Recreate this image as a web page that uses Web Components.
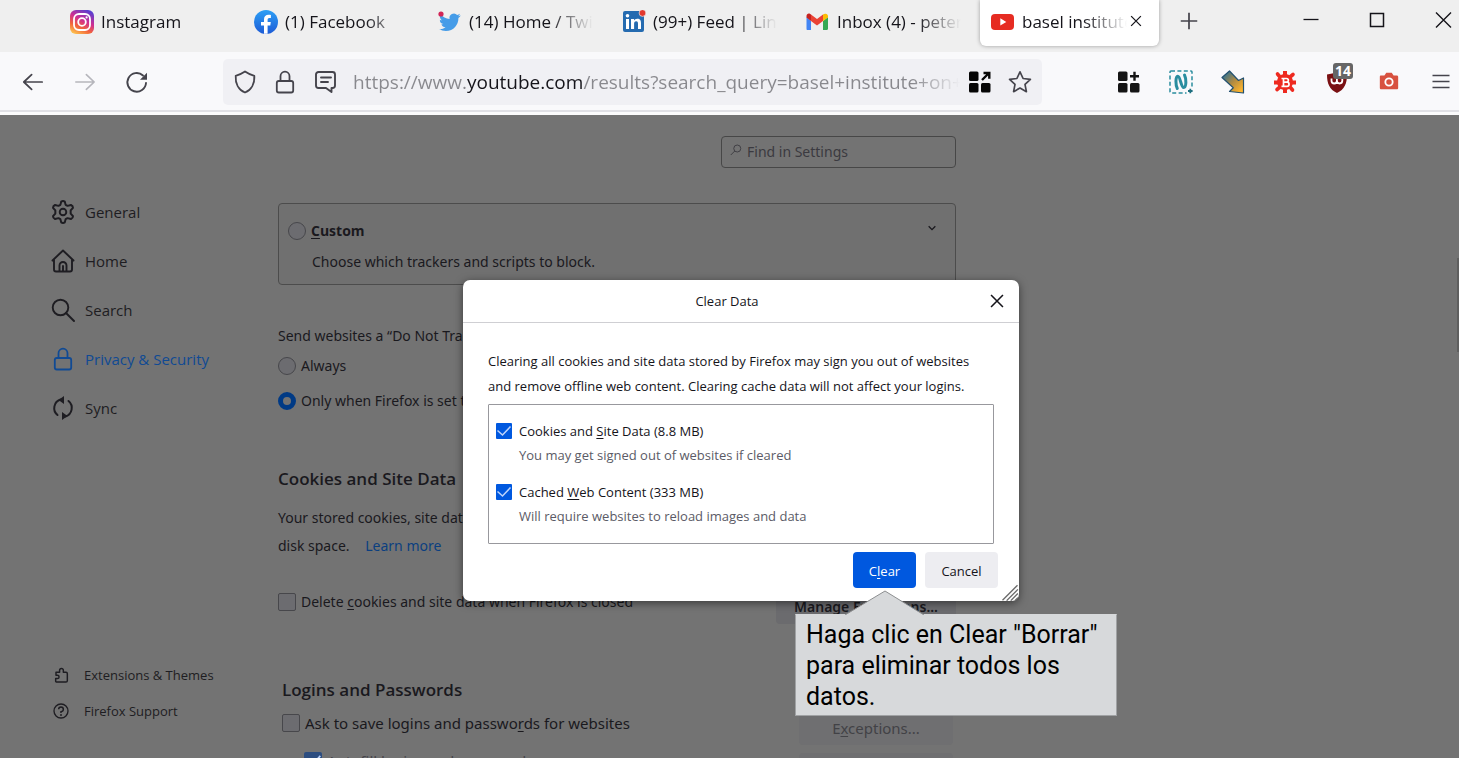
<!DOCTYPE html>
<html lang="en">
<head>
<meta charset="utf-8">
<title>Settings</title>
<style>
  html, body { height: 100%; }
  body {
    margin: 0;
    display: flex;
    flex-direction: column;
    overflow: hidden;
    font-family: "Open Sans", "Noto Sans", sans-serif;
    font-size: 14px;
    color: #15141a;
  }
</style>
</head>
<body>
<tab-strip>
  <browser-tab><ui-icon slot="icon" name="instagram" size="24"></ui-icon>Instagram</browser-tab>
  <browser-tab><ui-icon slot="icon" name="facebook" size="24"></ui-icon>(1) Facebook</browser-tab>
  <browser-tab><ui-icon slot="icon" name="twitter" size="24"></ui-icon>(14) Home / Twitter</browser-tab>
  <browser-tab><ui-icon slot="icon" name="linkedin" size="24"></ui-icon>(99+) Feed | LinkedIn</browser-tab>
  <browser-tab><ui-icon slot="icon" name="gmail" size="24"></ui-icon>Inbox (4) - peter</browser-tab>
  <browser-tab active><ui-icon slot="icon" name="youtube" size="24"></ui-icon>basel institute on</browser-tab>
</tab-strip>
<nav-toolbar></nav-toolbar>
<settings-page>
  <clear-data-dialog slot="dialog">
    <tip-callout slot="tip">Haga clic en Clear "Borrar" para eliminar todos los datos.</tip-callout>
  </clear-data-dialog>
</settings-page>

<script>
const ICONS = {
  instagram: `<defs><linearGradient id="g" x1="0.2" y1="1" x2="0.7" y2="0"><stop offset="0" stop-color="#fdc44f"/><stop offset=".3" stop-color="#f2653a"/><stop offset=".6" stop-color="#cf2e92"/><stop offset="1" stop-color="#5a3fd0"/></linearGradient></defs><rect width="24" height="24" rx="6" fill="url(#g)"/><rect x="4" y="4" width="16" height="16" rx="5" fill="none" stroke="#fff" stroke-width="1.8"/><circle cx="12" cy="12" r="3.8" fill="none" stroke="#fff" stroke-width="1.8"/><circle cx="16.6" cy="7.4" r="1.1" fill="#fff"/>`,
  facebook: `<defs><linearGradient id="g" x1="0" y1="0" x2="0" y2="1"><stop offset="0" stop-color="#2c9ff5"/><stop offset="1" stop-color="#1d5bd6"/></linearGradient></defs><circle cx="12" cy="12" r="12" fill="url(#g)"/><path d="M10 23.8V15.5H7V12h3V9.400C10 6.400 11.800 4.800 14.500 4.800c1.300 0 2.400.2 2.400.2v2.900h-1.500c-1.400 0-1.800.9-1.800 1.800V12h3.200l-.5 3.500h-2.700v8.300z" fill="#fff"/>`,
  twitter: `<path transform="translate(1 1.500) scale(.9)" fill="#459ce8" d="M23.950 4.570a10 10 0 0 1-2.820.770 4.960 4.960 0 0 0 2.160-2.720c-.95.550-2 .950-3.130 1.180a4.920 4.920 0 0 0-8.380 4.480C7.690 8.090 4.070 6.130 1.640 3.160a4.820 4.820 0 0 0-.670 2.480c0 1.710.870 3.210 2.190 4.100a4.900 4.900 0 0 1-2.230-.620v.060a4.920 4.920 0 0 0 3.950 4.830 5 5 0 0 1-2.210.080 4.940 4.940 0 0 0 4.600 3.420A9.870 9.870 0 0 1 0 19.540a13.940 13.940 0 0 0 7.550 2.210c9.050 0 14-7.500 14-13.980 0-.210 0-.420-.020-.630a9.940 9.940 0 0 0 2.460-2.550z"/><circle cx="3" cy="4" r="2.600" fill="#d22556"/>`,
  linkedin: `<g transform="translate(1 0)"><rect y="1" width="21" height="21" rx="2" fill="#256bb0"/><path fill="#fff" d="M3 9h3v10H3zM8 9h3v1.500C11.600 9.500 12.700 8.700 14.300 8.700c3 0 3.700 2 3.700 4.600V19h-3v-5c0-1.500-.2-2.700-1.800-2.700-1.700 0-2.100 1.300-2.100 2.700v5H8z"/><circle cx="4.500" cy="5.800" r="1.800" fill="#fff"/><circle cx="19.500" cy="3" r="3.400" fill="#e2382d" stroke="#efefef" stroke-width=".7"/></g>`,
  gmail: `<path fill="#4285f4" d="M1 20h4V11L.5 7v11.500C.500 19.500 1 20 1 20z"/><path fill="#34a853" d="M17 20h3.500c1 0 1.500-.7 1.500-1.500V7l-5 4z"/><path fill="#fbbc04" d="M17 4.500V11l5-3.500V6c0-2-2.200-3-3.700-1.900z"/><path fill="#ea4335" d="M5 11V4.500l6 4.600 6-4.600V11l-6 4.600z"/><path fill="#c5221f" d="M.5 6v1.500L5 11V4.500L4.200 4C2.500 3 .5 4 .5 6z"/>`,
  youtube: `<rect y="4" width="23" height="16" rx="4" fill="#e62c22"/><path d="M9.300 8.300v7.200l6-3.600z" fill="#fff"/>`,
  close: `<path d="M5.500 5.500l13 13M18.500 5.500l-13 13" stroke="currentColor" stroke-width="1.700" fill="none"/>`,
  plus: `<path d="M12 3v18M3 12h18" stroke="currentColor" stroke-width="1.900"/>`,
  minimize: `<path d="M4.500 11.500h15" stroke="currentColor" stroke-width="1.300"/>`,
  maximize: `<path d="M5.500 5.500h13v13h-13z" stroke="currentColor" stroke-width="1.500" fill="none"/>`,
  winclose: `<path d="M5 4.500l15 15M20 4.500l-15 15" stroke="currentColor" stroke-width="1.400"/>`,
  back: `<path d="M22 12H2M10.500 4l-8.500 8 8.500 8" stroke="currentColor" stroke-width="1.900" fill="none" stroke-linecap="round" stroke-linejoin="round"/>`,
  forward: `<path d="M2 12h20M13.500 4l8.500 8-8.500 8" stroke="currentColor" stroke-width="1.800" fill="none" stroke-linecap="round" stroke-linejoin="round"/>`,
  reload: `<path d="M21 13a9.300 9.300 0 1 1-3-7.500" stroke="currentColor" stroke-width="1.900" fill="none" stroke-linecap="round"/><path d="M22 2.800v7h-7z" fill="currentColor"/>`,
  shield: `<path d="M12 1.500c2.800 2 5.800 3.200 9.300 4.300C21.800 13.500 18.500 20 12 22.500 5.500 20 2.200 13.500 2.700 5.800 6.200 4.700 9.200 3.500 12 1.500z" stroke="currentColor" stroke-width="1.800" fill="none" stroke-linejoin="round"/>`,
  lock: `<rect x="3.800" y="11" width="16.400" height="11.500" rx="2" stroke="currentColor" stroke-width="1.800" fill="none"/><path d="M7.500 11V6.200a4.500 4.500 0 0 1 9 0V11" stroke="currentColor" stroke-width="1.800" fill="none"/>`,
  note: `<path d="M5.500 2h14a2.500 2.500 0 0 1 2.500 2.500v11a2.500 2.500 0 0 1-2.500 2.500H18.500v4l-5.500-4H5.500A2.500 2.500 0 0 1 3 15.500V4.500A2.500 2.500 0 0 1 5.500 2zM8 7.500h10M8 12h7" stroke="currentColor" stroke-width="1.900" fill="none" stroke-linejoin="round" stroke-linecap="round"/>`,
  gridarrow: `<g fill="#060606"><rect x="1" y="1.500" width="9.500" height="9.500" rx="1.500"/><rect x="1" y="13" width="9.500" height="9.500" rx="1.500"/><rect x="13" y="13" width="9.500" height="9.500" rx="1.500"/></g><path d="M14 10l7-7M15.500 3H21.300V8.800" stroke="#060606" stroke-width="2.400" fill="none"/>`,
  gridplus: `<g fill="#151515"><rect x="1" y="1.500" width="9.500" height="9.500" rx="1.500"/><rect x="1" y="13" width="9.500" height="9.500" rx="1.500"/><rect x="13" y="13" width="9.500" height="9.500" rx="1.500"/></g><path d="M17.500 1.800v9M13 6.300h9" stroke="#151515" stroke-width="2.400"/>`,
  star: `<path d="M12 1.800l3.100 6.700 7.300.9-5.400 5 1.400 7.300-6.400-3.600-6.400 3.600L7 14.400l-5.400-5 7.300-.9z" stroke="currentColor" stroke-width="1.700" fill="none" stroke-linejoin="round"/>`,
  nimbus: `<rect x="1" y="1" width="22" height="22" rx="1" fill="none" stroke="#2a8d9f" stroke-width="1.500" stroke-dasharray="4 2.400"/><path d="M8.300 18.500C6.500 15 6.300 6.500 8.800 6.300S12 17.500 14.700 17.500 17.500 9 15.500 5" fill="none" stroke="#2a8d9f" stroke-width="3" stroke-linecap="round"/><rect x="17.500" y="17.500" width="6.500" height="6.500" fill="#f9f9fb"/><path d="M21.300 18.700v4.600M19 21h4.600" stroke="#1f6f80" stroke-width="1.800"/>`,
  arrow: `<defs><linearGradient id="g" x1="0" y1="0" x2="1" y2="1"><stop offset=".1" stop-color="#2f7293"/><stop offset=".5" stop-color="#b08a42"/><stop offset=".9" stop-color="#ffb52c"/></linearGradient></defs><path d="M1 7.500L8.500 1l9 9.500L22.500 8v15L8.500 21.500l3.800-3.700z" fill="url(#g)" stroke="#22506f" stroke-width="1.200" stroke-linejoin="round"/>`,
  bug: `<circle cx="12" cy="12" r="8" fill="#ee2a20"/><g stroke="#ee2a20" stroke-width="4"><path d="M12 1v6M1 12.500h5M18 12.500h5M12 18v5"/></g><g stroke="#ee2a20" stroke-width="3.600" stroke-linecap="round"><path d="M7 7L4.500 4M17 7l3-2.500M7 17l-3 2.500M17 17l2.500 3"/></g><path d="M8.500 8.500h5a1.800 1.800 0 0 1 0 3.700H10.500h3.500a2 2 0 0 1 0 4.100H8.500M10.500 8.500v7.800" stroke="#fff" stroke-width="1.700" fill="none"/>`,
  ublock: `<path d="M12 1.500c3 2 6.500 2.500 10 3 0 9-2.500 15-10 18.500C4.500 19.500 2 13.500 2 4.500c3.500-.5 7-1 10-3z" fill="#7a1113"/><path d="M6.500 8.500v2.300a2.700 2.700 0 0 0 5.400 0V8.500v2.300a2.700 2.700 0 0 0 5.400 0V8.500" fill="none" stroke="#fff" stroke-width="1.800"/>`,
  camera: `<path d="M3 5h4l2-3h6l2 3h3.500c.9 0 1.500.6 1.500 1.500v12c0 .9-.6 1.500-1.500 1.500h-17C2.600 20 2 19.400 2 18.500v-12C2 5.600 2.300 5 3 5z" fill="#d8513f"/><circle cx="12" cy="12" r="4" fill="none" stroke="#fff" stroke-width="2"/>`,
  menu: `<path d="M3.500 5.500h17M3.500 11.500h17M3.500 17.500h17" stroke="currentColor" stroke-width="1.600"/>`,
  gear: `<path d="M10.300 1.600Q12 .4 13.700 1.600L14.500 4.900 16.300 5.900 19.600 5Q21.500 5.800 21.500 7.800L19.300 10.400V13.600L21.500 16.200Q21.500 18.200 19.600 19L16.300 18.100 14.500 19.100 13.700 22.400Q12 23.600 10.300 22.400L9.500 19.100 7.700 18.100 4.400 19Q2.500 18.200 2.500 16.200L4.700 13.600V10.400L2.500 7.800Q2.500 5.800 4.400 5L7.700 5.900 9.500 4.900z" transform="translate(-.6 0) scale(1.050 1)" stroke="currentColor" stroke-width="1.900" fill="none" stroke-linejoin="round"/><circle cx="12" cy="12" r="3.300" stroke="currentColor" stroke-width="1.900" fill="none"/>`,
  home: `<path d="M1.500 11.500L12 1.500l10.500 10M3 10.500v10a2 2 0 0 0 2 2h14a2 2 0 0 0 2-2v-10M8.500 22.500v-6a3.500 3.500 0 0 1 7 0v6M12 17v5" stroke="currentColor" stroke-width="1.900" fill="none" stroke-linejoin="round" stroke-linecap="round"/>`,
  search: `<circle cx="9.500" cy="9.500" r="7.800" stroke="currentColor" stroke-width="1.900" fill="none"/><path d="M15 15l8 8" stroke="currentColor" stroke-width="1.900" stroke-linecap="round"/>`,
  sync: `<path d="M9.500 3.500A9 9 0 0 0 6.500 19M14.500 20.500A9 9 0 0 0 17.500 5" stroke="currentColor" stroke-width="2" fill="none" stroke-linecap="round"/><path d="M13 0v8L7.500 4zM11 24v-8l5.500 4z" fill="currentColor"/>`,
  puzzle: `<path d="M5 22.500h14.500a2 2 0 0 0 2-2V10a2 2 0 0 0-2-2H15.500V5a2.800 2.800 0 0 0-5.600 0v3H4.500v4.500h2.200a2.400 2.400 0 0 1 0 4.800H4v4.200a1 1 0 0 0 1 1z" stroke="currentColor" stroke-width="2.200" fill="none" stroke-linejoin="round"/>`,
  help: `<circle cx="12" cy="12" r="10.500" stroke="currentColor" stroke-width="2" fill="none"/><path d="M8.500 9.500A3.500 3.500 0 1 1 12 13v2" stroke="currentColor" stroke-width="2.200" fill="none"/><circle cx="12" cy="18" r="1.400" fill="currentColor"/>`,
  find: `<circle cx="14.500" cy="9" r="7" stroke="currentColor" stroke-width="1.800" fill="none"/><path d="M9.500 14L1.500 22" stroke="currentColor" stroke-width="1.800"/>`,
  chevron: `<path d="M4 8l8 8 8-8" stroke="currentColor" stroke-width="3.200" fill="none"/>`,
  grip: `<path d="M2 23L22 3M7.500 23.500L22.500 8.500M13 23.500l9.500-9.500M18.500 23.500l4-4" stroke="#6b6b6b" stroke-width="1.800"/>`
};

const shadow = (host, html) => { host.attachShadow({ mode: "open" }).innerHTML = html; };

customElements.define("ui-icon", class extends HTMLElement {
  connectedCallback() {
    if (this.shadowRoot) return;
    const size = this.getAttribute("size") || 24;
    shadow(this, `<style>:host{display:inline-flex;flex:none}svg{display:block}</style>
      <svg width="${size}" height="${size}" viewBox="0 0 24 24" aria-hidden="true">${ICONS[this.getAttribute("name")]}</svg>`);
  }
});

customElements.define("icon-button", class extends HTMLElement {
  connectedCallback() {
    if (this.shadowRoot) return;
    shadow(this, `<style>
      :host{display:flex;flex:none;width:36px}
      button{all:unset;position:relative;display:flex;align-items:center;justify-content:center;width:100%;height:36px;color:inherit}
      ::slotted(*){position:absolute;left:14px;top:-1px}
      </style>
      <button type="button" aria-label="${this.getAttribute("label")}"><ui-icon name="${this.getAttribute("icon")}" size="${this.getAttribute("size") || 24}"></ui-icon><slot></slot></button>`);
  }
});

customElements.define("browser-tab", class extends HTMLElement {
  connectedCallback() {
    if (this.shadowRoot) return;
    const active = this.hasAttribute("active");
    shadow(this, `<style>
      :host{display:flex;align-items:center;flex:0 1 184px;min-width:0;height:46px}
      :host([active]){flex-basis:179px;margin-left:1px;background:#fff;border-radius:0 0 6px 6px;box-shadow:0 0 4px rgba(0,0,0,.35)}
      .tab{all:unset;display:flex;align-items:center;flex:1;min-width:0;gap:7px;padding:0 18px 3px 11px;box-sizing:border-box;height:100%;font-size:17px;line-height:24px}
      :host([active]) .tab{padding-right:0}
      .label{flex:1;overflow:hidden;white-space:nowrap;-webkit-mask-image:linear-gradient(to left,transparent,#000 44px)}
      .x{all:unset;display:flex;padding:0 14px 4px 0}
      </style>
      <button class="tab" role="tab" aria-selected="${active}"><slot name="icon"></slot><span class="label"><slot></slot></span></button>
      ${active ? `<button class="x" aria-label="Close tab"><ui-icon name="close" size="18"></ui-icon></button>` : ""}`);
  }
});

customElements.define("tab-strip", class extends HTMLElement {
  connectedCallback() {
    if (this.shadowRoot) return;
    shadow(this, `<style>
      :host{display:flex;flex:none;align-items:flex-start;height:52px;background:#efefef;color:#15141a}
      .tabs{display:flex;flex:0 1 1159px;min-width:0;padding-left:59px;box-sizing:border-box}
      .new{padding-top:3px;margin-left:12px;color:#45444c}
      .win{display:flex;gap:30px;margin-left:auto;padding-top:2px;margin-right:-2px}
      </style>
      <div class="tabs" role="tablist"><slot></slot></div>
      <icon-button class="new" icon="plus" size="22" label="New tab"></icon-button>
      <div class="win">
        <icon-button icon="minimize" label="Minimize"></icon-button>
        <icon-button icon="maximize" label="Maximize"></icon-button>
        <icon-button icon="winclose" label="Close window"></icon-button>
      </div>`);
  }
});

customElements.define("nav-toolbar", class extends HTMLElement {
  connectedCallback() {
    if (this.shadowRoot) return;
    shadow(this, `<style>
      :host{display:flex;flex:none;align-items:center;box-sizing:border-box;height:63px;background:#f9f9fb;
        border-bottom:3px solid #fbfbfc;box-shadow:inset 0 -2px #e0e0e5;padding:2px 0 2px 15px;color:#45444c}
      .group{display:flex;flex:none;gap:16px}
      .off{color:#b6b6bc}
      .url{display:flex;align-items:center;flex:1;min-width:0;height:46px;margin:0 69px 0 68px;padding:0 2px;border-radius:5px;background:#f0f0f4;box-sizing:border-box}
      .url icon-button{width:40px}
      input{all:unset;flex:1;min-width:0;margin-left:8px;font-size:19px;line-height:30px;height:30px;color:transparent;
        background:linear-gradient(to right,#88888d 114px,#15141a 114px,#15141a 230px,#88888d 230px,#88888d calc(100% - 48px),transparent 100%);
        -webkit-background-clip:text;background-clip:text}
      .badge{padding:0 2px;border-radius:3px;background:#666;color:#fff;font-size:14px;line-height:16px;font-weight:700}
      </style>
      <div class="group">
        <icon-button icon="back" size="22" label="Back"></icon-button>
        <icon-button class="off" icon="forward" size="22" label="Forward"></icon-button>
        <icon-button icon="reload" label="Reload"></icon-button>
      </div>
      <div class="url">
        <icon-button icon="shield" label="Tracking protection"></icon-button>
        <icon-button icon="lock" label="Site information"></icon-button>
        <icon-button icon="note" label="Permissions"></icon-button>
        <input type="text" aria-label="Address" value="https://www.youtube.com/results?search_query=basel+institute+on+governance">
        <icon-button icon="gridarrow" label="Open in container"></icon-button>
        <icon-button icon="star" label="Bookmark this page"></icon-button>
      </div>
      <div class="group">
        <icon-button icon="gridplus" label="Add to grid"></icon-button>
        <icon-button icon="nimbus" label="Screen capture"></icon-button>
        <icon-button icon="arrow" label="Downloader"></icon-button>
        <icon-button icon="bug" label="Bug"></icon-button>
        <icon-button icon="ublock" label="Blocker"><span class="badge">14</span></icon-button>
        <icon-button icon="camera" size="22" label="Screenshot"></icon-button>
        <icon-button icon="menu" label="Menu"></icon-button>
      </div>`);
  }
});

const CHECK = "url(\"data:image/svg+xml,%3Csvg xmlns='http://www.w3.org/2000/svg' viewBox='0 0 16 16'%3E%3Cpath d='M1.500 7.500l5 4.500 8-8.500' fill='none' stroke='%23bcd3fb' stroke-width='1.500'/%3E%3C/svg%3E\")";

customElements.define("side-nav", class extends HTMLElement {
  connectedCallback() {
    if (this.shadowRoot) return;
    shadow(this, `<style>
      :host{display:flex;flex-direction:column;flex:none;width:278px;box-sizing:border-box;padding:85px 0 0 51px;font-family:"Open Sans",sans-serif}
      nav{display:flex;flex-direction:column;gap:25px}
      a{display:flex;align-items:center;gap:10px;height:24px;color:#1e1d22;text-decoration:none;font-size:15px;line-height:24px}
      a.on{color:#104a94}
      nav + nav{margin-top:243px;gap:12px}
      nav + nav a{font-size:13px;gap:15px;padding-left:2px}
      </style>
      <nav aria-label="Categories">
        <a href="#general"><ui-icon name="gear"></ui-icon>General</a>
        <a href="#home"><ui-icon name="home"></ui-icon>Home</a>
        <a href="#search"><ui-icon name="search"></ui-icon>Search</a>
        <a class="on" href="#privacy" aria-current="page"><ui-icon name="lock"></ui-icon>Privacy &amp; Security</a>
        <a href="#sync"><ui-icon name="sync"></ui-icon>Sync</a>
      </nav>
      <nav aria-label="More">
        <a href="#addons"><ui-icon name="puzzle" size="16"></ui-icon>Extensions &amp; Themes</a>
        <a href="#support"><ui-icon name="help" size="16"></ui-icon>Firefox Support</a>
      </nav>`);
  }
});

customElements.define("settings-page", class extends HTMLElement {
  connectedCallback() {
    if (this.shadowRoot) return;
    shadow(this, `<style>
      :host{display:flex;flex:1;min-height:0;position:relative;overflow:hidden;background:#737373;color:#1a191e;font-size:14px;line-height:20px}
      main{flex:0 1 678px;min-width:0;padding-top:21px;font-family:"Noto Sans","Open Sans",sans-serif}
      .find{display:flex;align-items:center;gap:5px;width:235px;height:32px;box-sizing:border-box;margin-left:auto;padding:0 8px;border:1px solid #474747;border-radius:4px;color:#3b3a40}
      .find ui-icon{padding-bottom:4px}
      .find input{all:unset;flex:1;min-width:0}
      .find input::placeholder{color:#3b3a40;opacity:1}
      .card{display:flex;margin-top:35px;padding:17px 18px 12px 9px;border:1px solid #4c4c4c;border-radius:4px;background:#707070}
      .card div{flex:1}
      .card p{margin:11px 0 0 24px}
      .card b,h2{font-family:"Open Sans",sans-serif}
      .card > ui-icon{padding-top:2px}
      label{display:flex;align-items:center;gap:5px}
      u{text-underline-offset:2px}
      p{margin:0}
      input[type=radio],input[type=checkbox]{appearance:none;flex:none;margin:0;width:18px;height:18px;box-sizing:border-box;border:1px solid #47474b;background:#6c6c70}
      input[type=radio]{border-radius:50%}
      input[type=checkbox]{border-radius:2px}
      input[type=radio]:checked{border:5px solid #003a85;background:#737373}
      input[type=checkbox]:checked{border:0;background:#2c4d80 ${CHECK}}
      fieldset{border:0;margin:41px 0 0;padding:0;min-width:0}
      legend{padding:0;margin-bottom:10px}
      fieldset label + label{margin-top:15px}
      h2{margin:0;font-size:17px;line-height:20px;font-weight:600}
      .cookies h2{margin:58px 0 15px}
      .cookies p{line-height:28px;width:420px}
      a{color:#0b3f80;text-decoration:none;margin-left:12px}
      .row{display:flex;justify-content:space-between;align-items:flex-start}
      .row label{line-height:24px}
      .cookies .row{margin-top:30px}
      .logins{padding:56px 3px 0 4px}
      .logins .row{margin-top:11px}
      .logins .row label{font-size:15px}
      .stack{display:flex;flex-direction:column;gap:14px}
      .buttons{display:flex;flex-direction:column;gap:8px;width:154px}
      .sub{margin-left:22px;color:#45444a}
      button{all:unset;box-sizing:border-box;height:34px;padding:0 18px;border-radius:4px;background:#6b6b6e;text-align:center;font-weight:600;line-height:34px;white-space:nowrap}
      .buttons button{font-weight:400;font-size:15px;color:#424246;background:#6f6f71}
      .bar{position:absolute;right:0;top:143px;width:2px;height:94px;background:#5f5f5f}
      .layer{position:absolute;inset:0;display:flex;justify-content:center;align-items:flex-start;padding:165px 0 0 23px}
      </style>
      <side-nav></side-nav>
      <main>
        <div class="find"><ui-icon name="find" size="12"></ui-icon><input type="search" placeholder="Find in Settings" aria-label="Find in Settings"></div>
        <section class="card">
          <div>
            <label><input type="radio" name="tracking"><b><u>C</u>ustom</b></label>
            <p>Choose which trackers and scripts to block.</p>
          </div>
          <ui-icon name="chevron" size="10"></ui-icon>
        </section>
        <fieldset>
          <legend>Send websites a “Do Not Track” signal</legend>
          <label><input type="radio" name="dnt">Always</label>
          <label><input type="radio" name="dnt" checked>Only when Firefox is set to block known trackers</label>
        </fieldset>
        <section class="cookies">
          <h2>Cookies and Site Data</h2>
          <p>Your stored cookies, site data, and cache are currently using disk space. <a href="#learn">Learn more</a></p>
          <div class="row">
            <label><input type="checkbox"><span>Delete <u>c</u>ookies and site data when Firefox is closed</span></label>
            <button type="button">Manage E<u>x</u>ceptions...</button>
          </div>
        </section>
        <section class="logins">
          <h2>Logins and Passwords</h2>
          <div class="row">
            <div class="stack">
              <label><input type="checkbox"><span>Ask to save logins and passwo<u>r</u>ds for websites</span></label>
              <label class="sub"><input type="checkbox" checked disabled><span>Autofill logins and passwords</span></label>
            </div>
            <div class="buttons">
              <button type="button" disabled>E<u>x</u>ceptions...</button>
              <button type="button">Saved Logins...</button>
            </div>
          </div>
        </section>
      </main>
      <div class="bar"></div>
      <div class="layer"><slot name="dialog"></slot></div>`);
  }
});

customElements.define("clear-data-dialog", class extends HTMLElement {
  connectedCallback() {
    if (this.shadowRoot) return;
    shadow(this, `<style>
      :host{display:block;position:relative;width:556px;background:#fff;border-radius:7px;box-shadow:0 2px 8px rgba(0,0,0,.5);color:#15141a;font-size:13px;line-height:24px}
      header{display:flex;align-items:center;height:42px;border-bottom:1px solid #cfcfd3}
      h1{flex:1;margin:0 0 0 16px;text-align:center;font-size:13px;font-weight:400}
      header icon-button{width:44px}
      .body{padding:26px 25px 0}
      .body p{margin:0 0 5px;line-height:25px;white-space:nowrap}
      .box{border:1px solid #98989d;padding:14px 7px 15px;border-radius:1px}
      .item + .item{margin-top:13px}
      label{display:flex;align-items:center;gap:7px}
      input{appearance:none;flex:none;margin:0;width:16px;height:16px;border-radius:1px;background:#0058df ${CHECK}}
      small{display:block;margin-left:23px;font-size:13px;color:#5b5b66}
      footer{display:flex;justify-content:flex-end;gap:9px;padding:8px 21px 13px}
      .ok,.no{all:unset;box-sizing:border-box;height:36px;line-height:38px;border-radius:4px;text-align:center;background:#ededf1;width:73px}
      .ok{background:#0058df;color:#fff;width:63px}
      u{text-underline-offset:2px}
      .grip{position:absolute;right:0;bottom:0}
      ::slotted(tip-callout){position:absolute;left:332px;top:310px}
      </style>
      <header><h1>Clear Data</h1><icon-button icon="close" size="22" label="Close"></icon-button></header>
      <div class="body">
        <p>Clearing all cookies and site data stored by Firefox may sign you out of websites<br>and remove offline web content. Clearing cache data will not affect your logins.</p>
        <div class="box">
          <div class="item"><label><input type="checkbox" checked><span>Cookies and <u>S</u>ite Data (8.8 MB)</span></label><small>You may get signed out of websites if cleared</small></div>
          <div class="item"><label><input type="checkbox" checked><span>Cached <u>W</u>eb Content (333 MB)</span></label><small>Will require websites to reload images and data</small></div>
        </div>
      </div>
      <footer><button class="ok" type="button">C<u>l</u>ear</button><button class="no" type="button">Cancel</button></footer>
      <ui-icon class="grip" name="grip" size="18"></ui-icon>
      <slot name="tip"></slot>`);
  }
});

customElements.define("tip-callout", class extends HTMLElement {
  connectedCallback() {
    if (this.shadowRoot) return;
    shadow(this, `<style>
      :host{display:block;width:322px;color:#000;font-family:Roboto,sans-serif;font-size:25px;line-height:31px}
      svg{display:block;margin:0 0 -1px 50px;position:relative}
      div{background:#d7d9db;border:1px solid #a0a2a4;border-top-color:#d7d9db;padding:4px 8px 3px 10px}
      </style>
      <svg width="80" height="25" viewBox="0 0 80 25"><path d="M0 25L40 1l39 24z" fill="#d7d9db"/><path d="M0 25L40 1l39 24" fill="none" stroke="#8c8e90" stroke-width="1"/></svg>
      <div role="tooltip"><slot></slot></div>`);
  }
});
</script>
</body>
</html>
